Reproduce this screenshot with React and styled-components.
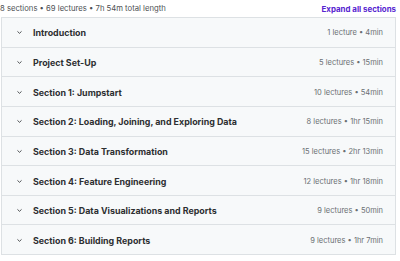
import React from "react";
import styled, { createGlobalStyle } from "styled-components";

const Global = createGlobalStyle`
  html, body { margin: 0; padding: 0; background: #fff; }
  body { font-family: Inter, "Noto Sans", sans-serif; }
`;

const Wrap = styled.div`
  width: 400px;
  padding: 0 4px 0 1px;
  box-sizing: border-box;
`;

const Header = styled.div`
  display: flex;
  justify-content: space-between;
  align-items: center;
  height: 17px;
  margin-left: -1px;
  margin-right: -4px;
`;

const Summary = styled.span`
  font-size: 7.7px;
  color: #4d5053;
`;

const ExpandLink = styled.a`
  font-size: 7.9px;
  font-weight: 700;
  color: #5624d0;
  text-decoration: none;
  padding-right: 4px;
`;

const List = styled.div`
  border: 1px solid #dde1e4;
  border-bottom: none;
`;

const Row = styled.div`
  display: flex;
  align-items: center;
  height: 28.65px;
  padding: 0 12px 0 14px;
  background: #f7f9fa;
  border-bottom: 1px solid #dde1e4;
`;

const Chevron = styled.svg`
  width: 7px;
  height: 7px;
  flex: none;
  margin-right: 10px;
  margin-top: 1px;
`;

const Title = styled.span`
  flex: 1;
  font-size: 8.9px;
  font-weight: 700;
  color: #2d2f31;
  margin-top: 1px;
`;

const Meta = styled.span`
  font-size: 7.5px;
  color: #6a6f73;
  white-space: nowrap;
  margin-top: 1px;
`;

const sections = [
  ["Introduction", "1 lecture • 4min"],
  ["Project Set-Up", "5 lectures • 15min"],
  ["Section 1: Jumpstart", "10 lectures • 54min"],
  ["Section 2: Loading, Joining, and Exploring Data", "8 lectures • 1hr 15min"],
  ["Section 3: Data Transformation", "15 lectures • 2hr 13min"],
  ["Section 4: Feature Engineering", "12 lectures • 1hr 18min"],
  ["Section 5: Data Visualizations and Reports", "9 lectures • 50min"],
  ["Section 6: Building Reports", "9 lectures • 1hr 7min"],
];

export default function App() {
  return (
    <>
      <Global />
      <Wrap>
        <Header>
          <Summary>8 sections • 69 lectures • 7h 54m total length</Summary>
          <ExpandLink href="#">Expand all sections</ExpandLink>
        </Header>
        <List>
          {sections.map(([t, m]) => (
            <Row key={t}>
              <Chevron viewBox="0 0 10 10">
                <path d="M2.5 3.8 L5 6.2 L7.5 3.8" fill="none" stroke="#3e4143" strokeWidth="1.3" strokeLinecap="round" strokeLinejoin="round" />
              </Chevron>
              <Title>{t}</Title>
              <Meta>{m}</Meta>
            </Row>
          ))}
        </List>
      </Wrap>
    </>
  );
}
